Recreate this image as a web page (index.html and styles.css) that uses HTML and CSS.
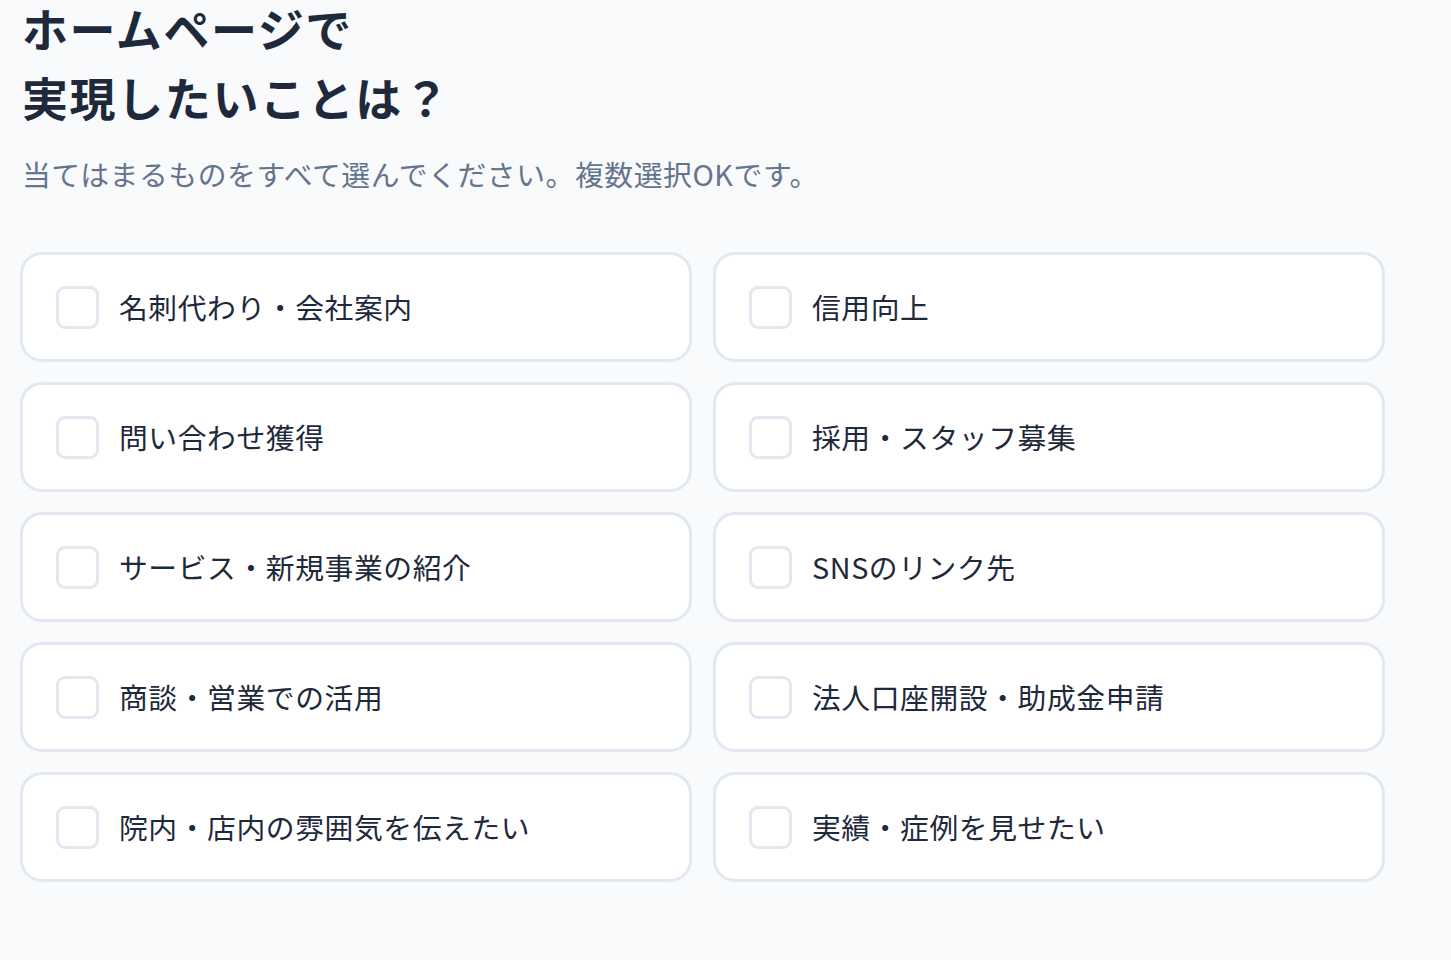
FILE: index.html
```html
<!DOCTYPE html>
<html lang="ja">
<head>
    <meta charset="UTF-8">
    <meta name="viewport" content="width=device-width, initial-scale=1.0">
    <title>ホームページで実現したいことは？</title>
    <link rel="stylesheet" href="styles.css">
</head>
<body>
    <div class="question">
        <h1 class="question-title">ホームページで<br>実現したいことは？</h1>
        <p class="question-note">当てはまるものをすべて選んでください。複数選択OKです。</p>

        <div class="options">
            <label class="option"><input type="checkbox"><span>名刺代わり・会社案内</span></label>
            <label class="option"><input type="checkbox"><span>信用向上</span></label>
            <label class="option"><input type="checkbox"><span>問い合わせ獲得</span></label>
            <label class="option"><input type="checkbox"><span>採用・スタッフ募集</span></label>
            <label class="option"><input type="checkbox"><span>サービス・新規事業の紹介</span></label>
            <label class="option"><input type="checkbox"><span>SNSのリンク先</span></label>
            <label class="option"><input type="checkbox"><span>商談・営業での活用</span></label>
            <label class="option"><input type="checkbox"><span>法人口座開設・助成金申請</span></label>
            <label class="option"><input type="checkbox"><span>院内・店内の雰囲気を伝えたい</span></label>
            <label class="option"><input type="checkbox"><span>実績・症例を見せたい</span></label>
        </div>
    </div>
</body>
</html>
```

FILE: styles.css
```css
html, body {
    margin: 0;
    padding: 0;
}
body {
    font-family: "Noto Sans CJK JP", "Noto Sans", sans-serif;
    background-color: #F8FAFC; /* very light slate */
    color: #1E293B;
    height: 960px;
    overflow: hidden;
}
.question {
    padding: 0 20px;
    width: 1366px;
}
.question-title {
    margin: -7px 0 0 2px;
    font-size: 46px;
    line-height: 69px;
    font-weight: 700;
    letter-spacing: 0.035em;
    color: #1E293B;
}
.question-note {
    margin: 21px 0 0 2px;
    font-size: 28.8px;
    line-height: 43px;
    letter-spacing: 0.02em;
    color: #64748B;
}
.options {
    margin-top: 57px;
    display: grid;
    grid-template-columns: 672px 672px;
    column-gap: 21px;
    row-gap: 20px;
}
.option {
    box-sizing: border-box;
    height: 110px;
    display: flex;
    align-items: center;
    gap: 20px;
    padding: 0 33px;
    background-color: #FFF;
    border: 3px solid #E2E8F0;
    border-radius: 22px;
    font-size: 28.8px;
    letter-spacing: 0.02em;
    color: #1E293B;
    cursor: pointer;
}
.option input {
    appearance: none;
    -webkit-appearance: none;
    box-sizing: border-box;
    margin: 0;
    width: 43px;
    height: 43px;
    flex: none;
    border: 3px solid #E2E8F0;
    border-radius: 9px;
    background-color: #FFF;
}
.option span {
    line-height: 1.5;
}
```
